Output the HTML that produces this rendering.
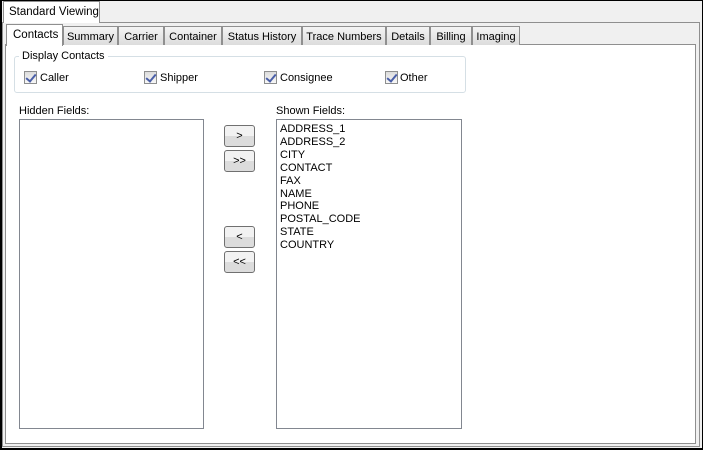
<!DOCTYPE html>
<html><head><style>
*{margin:0;padding:0;box-sizing:border-box}
body{width:703px;height:450px;position:relative;background:#f0f0f0;font-family:"Liberation Sans",sans-serif;font-size:11px;color:#000;overflow:hidden;white-space:nowrap}
.a{position:absolute}
.frame{left:0;top:0;width:703px;height:450px;border:1px solid #000;border-width:1px 1px 2px 2px}
.tab{position:absolute;top:26px;height:19px;background:linear-gradient(#f4f4f4,#dcdcdc);border:1px solid #8f8f8f;border-bottom:none;text-align:center;line-height:20px}
.cb{position:absolute;top:71px;width:13px;height:13px;border:1px solid #8e8f8f;background:linear-gradient(#dcdcdc,#f8f8f8)}
.cb:after{content:"";position:absolute;left:3px;top:0px;width:4px;height:8px;border:solid #4a5fa8;border-width:0 2px 2px 0;transform:rotate(40deg)}
.lbl{position:absolute;top:72px}
.btn{position:absolute;left:224px;width:31px;height:22px;border:1px solid #707070;border-radius:3px;background:linear-gradient(#f2f2f2 50%,#dcdcdc 50%);text-align:center;line-height:20px}
.list{position:absolute;top:119px;height:310px;border:1px solid #828790;background:#fff}
</style></head><body>
<div class="a frame"></div>
<div class="a" style="left:2px;top:22px;width:698px;height:425px;border:1px solid #8f8f8f;background:#f0f0f0"></div>
<div class="a" style="left:3px;top:1px;width:97px;height:22px;background:#fff;border:1px solid #8f8f8f;border-bottom:none;line-height:21px;padding-left:5px;font-size:11.5px">Standard Viewing</div>
<div class="a" style="left:5px;top:44px;width:691px;height:400px;border:1px solid #8f8f8f;background:#fff"></div>
<div class="tab" style="left:63px;width:55px">Summary</div>
<div class="tab" style="left:118px;width:46px">Carrier</div>
<div class="tab" style="left:164px;width:58px">Container</div>
<div class="tab" style="left:222px;width:80px">Status History</div>
<div class="tab" style="left:302px;width:84px">Trace Numbers</div>
<div class="tab" style="left:386px;width:44px">Details</div>
<div class="tab" style="left:430px;width:42px">Billing</div>
<div class="tab" style="left:472px;width:48px">Imaging</div>
<div class="a" style="left:6px;top:24px;width:57px;height:22px;background:#fff;border:1px solid #8f8f8f;border-bottom:none;line-height:21px;padding-left:6px;font-size:11.5px">Contacts</div>
<div class="a" style="left:14px;top:56px;width:452px;height:37px;border:1px solid #d5dfe5;border-radius:3px"></div>
<div class="a" style="left:19px;top:50px;background:#fff;padding:0 3px;font-size:11px">Display Contacts</div>
<div class="cb" style="left:24px"></div><div class="lbl" style="left:40px">Caller</div>
<div class="cb" style="left:144px"></div><div class="lbl" style="left:160px">Shipper</div>
<div class="cb" style="left:264px"></div><div class="lbl" style="left:280px">Consignee</div>
<div class="cb" style="left:385px"></div><div class="lbl" style="left:400px">Other</div>
<div class="a" style="left:19px;top:105px">Hidden Fields:</div>
<div class="a" style="left:276px;top:105px">Shown Fields:</div>
<div class="list" style="left:19px;width:185px"></div>
<div class="list" style="left:276px;width:186px;padding:3px 0 0 3px;line-height:12.9px">ADDRESS_1<br>ADDRESS_2<br>CITY<br>CONTACT<br>FAX<br>NAME<br>PHONE<br>POSTAL_CODE<br>STATE<br>COUNTRY</div>
<div class="btn" style="top:125px">&gt;</div>
<div class="btn" style="top:150px">&gt;&gt;</div>
<div class="btn" style="top:226px">&lt;</div>
<div class="btn" style="top:251px">&lt;&lt;</div>
</body></html>
